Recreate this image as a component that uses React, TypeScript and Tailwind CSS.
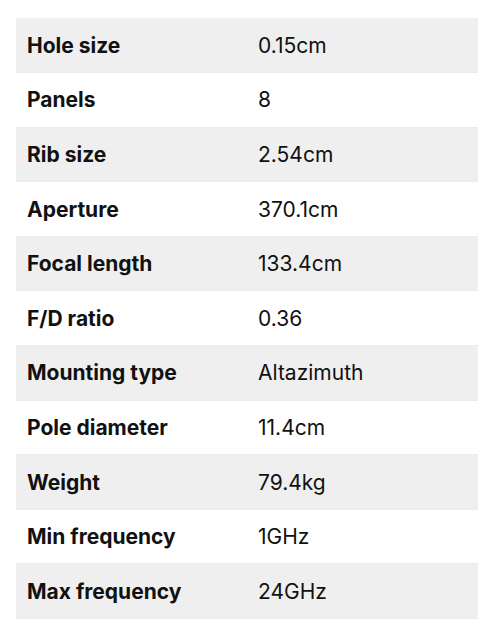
const specs: [string, string][] = [
  ['Hole size', '0.15cm'],
  ['Panels', '8'],
  ['Rib size', '2.54cm'],
  ['Aperture', '370.1cm'],
  ['Focal length', '133.4cm'],
  ['F/D ratio', '0.36'],
  ['Mounting type', 'Altazimuth'],
  ['Pole diameter', '11.4cm'],
  ['Weight', '79.4kg'],
  ['Min frequency', '1GHz'],
  ['Max frequency', '24GHz'],
];

export default function App() {
  return (
    <div className="min-h-screen bg-white pt-[18px] px-4 font-['Inter',sans-serif] text-[#111]">
      <table className="w-[462px] border-collapse table-fixed">
        <tbody>
          {specs.map(([label, value], i) => (
            <tr
              key={label}
              className={`border-b border-[#ececec] ${i % 2 === 0 ? 'bg-[#efefef]' : 'bg-white'}`}
            >
              <td className="h-[54.6px] pl-[11px] text-[21px] font-bold leading-none">{label}</td>
              <td className="h-[54.6px] pl-[11px] text-[21px] font-normal leading-none">{value}</td>
            </tr>
          ))}
        </tbody>
      </table>
    </div>
  );
}
